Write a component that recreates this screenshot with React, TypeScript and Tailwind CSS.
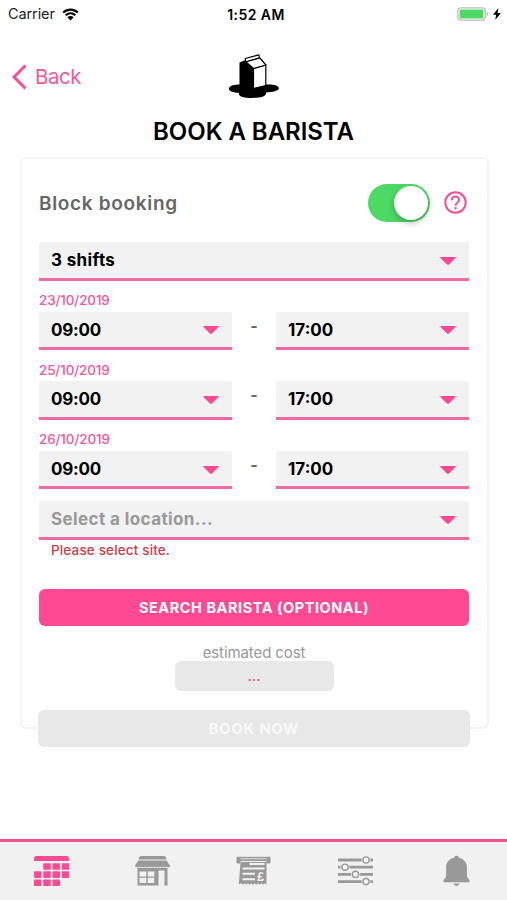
import React from 'react'

const shifts = [
  { date: '23/10/2019', from: '09:00', to: '17:00' },
  { date: '25/10/2019', from: '09:00', to: '17:00' },
  { date: '26/10/2019', from: '09:00', to: '17:00' },
]

function Caret() {
  return (
    <svg className="h-2 w-4" viewBox="0 0 16 8">
      <path d="M0.8 0h14.4c.8 0 .9.6.4 1L9.3 7.2c-.8.8-1.8.8-2.6 0L.4 1C-.1.6 0 0 .8 0z" fill="#ff4a93" />
    </svg>
  )
}

function Select({ value, className = '' }: { value: string; className?: string }) {
  return (
    <div className={`flex h-[38.6px] items-center justify-between rounded-t-[2px] border-b-3 border-[#f268a2] bg-[#f2f2f2] pl-3 pr-[13px] pt-[2px] text-[17px] font-bold ${className}`}>
      <span>{value}</span>
      <Caret />
    </div>
  )
}

function StatusBar() {
  return (
    <div className="grid h-7 grid-cols-3 items-center pl-[8px] pr-[6px] text-[14.5px] text-[#222]">
      <div className="flex items-center gap-[7px]">
        <span className="tracking-[-0.1px]">Carrier</span>
        <svg className="h-[13px] w-[17px]" viewBox="0 0 17 13">
          <path d="M1.2 4.6c4.2-4 10.4-4 14.6 0M3.7 7.3c2.8-2.6 6.8-2.6 9.6 0" fill="none" stroke="#000" strokeWidth="2.1" />
          <path d="M5.4 9.3c1.8-1.6 4.4-1.6 6.2 0L8.5 12.5z" fill="#000" />
        </svg>
      </div>
      <div className="whitespace-nowrap pl-[3px] text-center text-[14px] font-semibold tracking-[0.45px] text-black">1:52 AM</div>
      <div className="flex items-center justify-end gap-[4px]">
        <svg className="h-[14px] w-8" viewBox="0 0 32 14">
          <rect x="0.8" y="0.8" width="27.4" height="12.4" rx="3" fill="#fff" stroke="#bbb" strokeWidth="1.3" />
          <rect x="2.6" y="2.6" width="23.8" height="8.8" rx="1" fill="#4cd964" />
          <path d="M29.7 5c1.7.7 1.7 3.3 0 4z" fill="#aaa" />
        </svg>
        <svg className="h-[12px] w-[8px]" viewBox="0 0 8 12">
          <path d="M5.4 0L0 6.8h3.2L2.2 12 8 4.9H4.6z" fill="#000" />
        </svg>
      </div>
    </div>
  )
}

function MilkLogo() {
  return (
    <svg className="h-[44px] w-[52px]" viewBox="0 0 52 44">
      <path d="M1 34c1-3 8-4 13-3.500h24c6-.5 12 .5 13 3.500 0 3-7 4-13 4.500 1 4-6 5.500-14 5.500s-14-1.500-13-5C5 38.500 0 37 1 34z" fill="#000" />
      <path d="M11.500 8.500L17.500 6l8.500 8.500V35L11.500 31z" fill="#000" />
      <path d="M25.500 14.500L37.800 11v20.500L25.500 34.500z" fill="#fff" stroke="#000" strokeWidth="1.200" />
      <path d="M17.500 7.500l14.500-3.500 5.800 7-12.300 3.500z" fill="#fff" stroke="#000" strokeWidth="1.200" strokeLinejoin="round" />
      <path d="M17.200 4.500L30.800.8l.8 3-14 4z" fill="#fff" stroke="#000" strokeWidth="1.200" strokeLinejoin="round" />
    </svg>
  )
}

function CalendarIcon() {
  // [column, row] of every day that is filled in
  const days = [[1, 0], [2, 0], [3, 0], [0, 1], [1, 1], [2, 1], [3, 1], [0, 2], [1, 2], [2, 2]]
  return (
    <svg className="h-[30px] w-[35px]" viewBox="0 0 35 30" fill="#ff4a93">
      <path d="M0 5V2.500Q0 0 2.500 0h30Q35 0 35 2.500V5z" />
      {days.map(([x, y]) => (
        <rect key={`${x}-${y}`} x={x * 9.25} y={7.2 + y * 8.1} width="7.500" height="6.600" rx="0.800" />
      ))}
    </svg>
  )
}

function StoreIcon() {
  return (
    <svg className="h-[30px] w-[35px]" viewBox="0 0 35 30" fill="#999">
      <path d="M6 0h23q1.500 0 2 1.500l.5 2h-28l.5-2Q4.500 0 6 0z" />
      <path d="M3.500 4.500h28L35 9.500v1.200H0V9.500z" />
      <path d="M.5 10.500h34l-1.500 1.200-1.500-1-1.500 1-1.500-1-1.500 1-1.500-1-1.500 1-1.500-1-1.500 1-1.500-1-1.500 1-1.500-1-1.500 1-1.500-1-1.500 1-1.500-1-1.500 1-1.500-1-1.500 1-1.500-1-1.500 1z" />
      <path fillRule="evenodd" d="M2.500 12h30v17.500h-3V15.500q0-1-1-1h-4q-1 0-1 1v14h-21zM4.500 15.500v5h6.800v-5zM12.800 15.500v5h6.500v-5zM4.500 21.800v5.200h6.800v-5.200zM12.800 21.800v5.200h6.500v-5.200z" />
    </svg>
  )
}

function InvoiceIcon() {
  return (
    <svg className="h-[30px] w-[35px]" viewBox="0 0 35 30">
      <path d="M1 7V1.300h33V7h-3.200V4.500H4V7z" fill="#999" stroke="#999" strokeWidth="1" />
      <path d="M4.500 2.800h26" stroke="#e6e6e6" strokeWidth="0.900" />
      <path d="M4.500 6h26v22.500l-1.600-1.200-1.700 1.500-1.700-1.500-1.700 1.500-1.700-1.500-1.700 1.500-1.700-1.500-1.700 1.500-1.700-1.500-1.700 1.500-1.700-1.500-1.700 1.500-1.700-1.500-1.700 1.500-1.700-1.500-2.300 1.200z" fill="#999" />
      <path d="M13.500 8h15M6.500 12.500h22M6.500 17.800h12.500M6.500 23.200h12.500" stroke="#f2f2f2" strokeWidth="1.900" />
      <text x="24.500" y="25" textAnchor="middle" className="font-['Liberation_Sans',sans-serif] text-[12px] font-bold" fill="#f2f2f2">£</text>
    </svg>
  )
}

function SlidersIcon() {
  const knobs = [28, 7, 17.5, 28]
  return (
    <svg className="h-[30px] w-[35px]" viewBox="0 0 35 30">
      {knobs.map((x, i) => (
        <g key={i} stroke="#999">
          <path d={`M0 ${4 + i * 7.2}h35`} strokeWidth="2.800" />
          <circle cx={x} cy={4 + i * 7.2} r="4.200" fill="#f2f2f2" stroke="#f2f2f2" strokeWidth="0.500" />
          <circle cx={x} cy={4 + i * 7.2} r="3.100" fill="#f5f5f5" strokeWidth="1.400" />
        </g>
      ))}
    </svg>
  )
}

function BellIcon() {
  return (
    <svg className="-mt-px h-[31px] w-[27px]" viewBox="0 0 28 31" preserveAspectRatio="none" fill="#999">
      <path d="M11.500 2.800C11.500 0 16.500 0 16.500 2.800c5 1.200 8.300 4.800 8.300 9.200v8c0 2 .8 3.400 2.700 4.800v2.400H.5v-2.400c1.900-1.400 2.700-2.800 2.700-4.800v-8c0-4.400 3.300-8 8.300-9.200z" />
      <path d="M11 28.500h6c-.6 3.300-5.400 3.300-6 0z" />
    </svg>
  )
}

export default function App() {
  return (
    <main className="flex h-[900px] w-[507px] flex-col bg-white font-['Inter',sans-serif] text-black">
      <StatusBar />

      {/* Header */}
      <header className="grid h-[83px] grid-cols-3 pt-[26px]">
        <button className="ml-3 mt-[9px] flex h-7 items-center gap-[8px] text-[20.5px] tracking-[-0.45px] text-[#f6579a]">
          <svg className="h-[26px] w-[15px]" viewBox="0 0 15 26">
            <path d="M13.500 1.500L2 13l11.500 11.500" fill="none" stroke="#ff4a93" strokeWidth="3" />
          </svg>
          Back
        </button>
        <div className="flex justify-center">
          <MilkLogo />
        </div>
      </header>
      <h1 className="h-[46px] pt-[6px] text-center text-[24px] font-semibold leading-[30px] tracking-[-0.050px]">BOOK A BARISTA</h1>

      {/* Booking form */}
      <section className="ml-[19.500px] mr-[18.500px] h-[572px] rounded-[6px] border-2 border-[#f3f3f3] pl-[17.500px] pr-[17.500px]">
        <div className="flex h-[83px] items-center justify-between pt-[5px]">
          <span className="pt-[2px] text-[19px] font-semibold tracking-[0.68px] text-[#666]">Block booking</span>
          <div className="flex items-center gap-[14px]">
            <div className="flex h-[38px] w-[62px] justify-end rounded-full bg-[#4cd964] p-[2px]">
              <div className="h-[34px] w-[34px] rounded-full bg-white shadow-[0_3px_6px_rgba(0,0,0,0.25)]" />
            </div>
            <svg className="-mt-[2px] mr-[2px] h-[23px] w-[23px]" viewBox="0 0 23 23" fill="none" stroke="#f94d93" strokeWidth="2">
              <circle cx="11.500" cy="11.500" r="10.200" />
              <path d="M7.900 9.300c0-4.900 7.200-4.900 7.200-.3 0 2.700-3.600 2.800-3.600 5.800" />
              <path d="M11.500 16.200v2.200" strokeWidth="2.200" />
            </svg>
          </div>
        </div>

        <Select value="3 shifts" className="tracking-[0.35px]" />

        {shifts.map((s) => (
          <div key={s.date}>
            <div className="flex h-[31px] items-center text-[13.5px] font-medium tracking-[-0.15px] text-[#f6579a]">
              <span className="pt-[8px]">{s.date}</span>
            </div>
            <div className="flex">
              <Select value={s.from} className="w-[193px] tracking-[-0.2px]" />
              <span className="flex-1 pt-[2px] text-center text-[16px] font-bold text-[#666]">-</span>
              <Select value={s.to} className="w-[193px]" />
            </div>
          </div>
        ))}

        <Select value="Select a location..." className="mt-3 tracking-[0.4px] text-[#999]" />
        <p className="pl-3 text-[13.5px] font-medium leading-5 tracking-[0.15px] text-[#d33b45]">Please select site.</p>

        <button className="mt-[29.500px] block h-[37px] w-full rounded-[6px] bg-[#ff4a93] text-[14.5px] font-bold tracking-[0.55px] text-white">
          SEARCH BARISTA (OPTIONAL)
        </button>

        <p className="mt-[17px] text-center text-[15px] leading-5 tracking-[-0.1px] text-[#999]">estimated cost</p>
        <div className="mx-auto -mt-[2px] h-[30px] w-[159px] rounded-[6px] bg-[#e8e8e8] text-center text-[15px] leading-[30px] text-[#e84d84]">...</div>

        <button className="-mx-[1px] mt-[19px] block h-[37px] w-[432px] rounded-[6px] bg-[#e8e8e8] text-[14.5px] font-bold tracking-[1px] text-[#f8f8f8]">
          BOOK NOW
        </button>
      </section>

      {/* Tab bar */}
      <nav className="mt-auto grid h-[61.500px] grid-cols-5 justify-items-center border-t-[3px] border-[#f0528e] bg-[#f1f1f1] pl-px pt-[14px]">
        <CalendarIcon />
        <StoreIcon />
        <InvoiceIcon />
        <SlidersIcon />
        <BellIcon />
      </nav>
    </main>
  )
}
